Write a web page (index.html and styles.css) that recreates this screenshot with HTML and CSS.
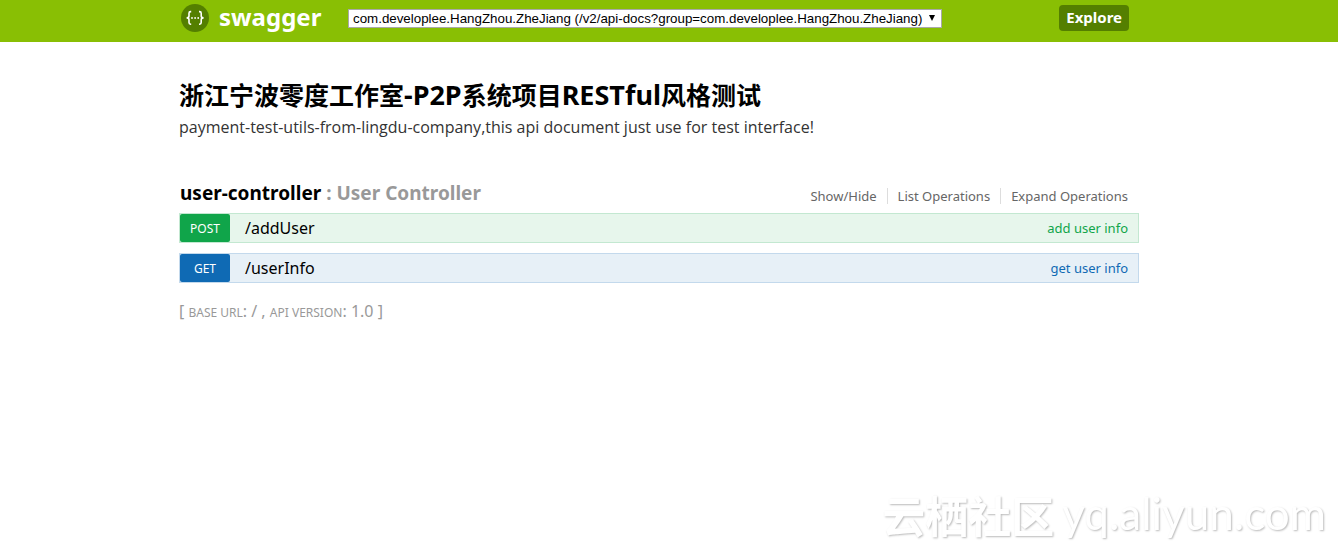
FILE: index.html
```html
<!DOCTYPE html>
<html lang="zh-CN">
<head>
  <meta charset="UTF-8">
  <meta name="viewport" content="width=device-width, initial-scale=1">
  <title>Swagger UI</title>
  <link rel="stylesheet" href="styles.css">
</head>
<body>
  <!-- Header -->
  <header class="header">
    <div class="wrap header-inner">
      <a class="logo" href="#">
        <svg class="logo-icon" viewBox="0 0 28 28" aria-hidden="true">
          <circle cx="14" cy="14" r="14" fill="#547f00"/>
          <g fill="none" stroke="#fff" stroke-width="1.6">
            <path d="M10.2 7.6H9.6Q8 7.6 8 9.2V12Q8 13.9 5.6 13.9Q8 13.9 8 15.8V18.6Q8 20.2 9.6 20.2H10.2"/>
            <path d="M18 7.6H18.6Q20.2 7.6 20.2 9.2V12Q20.2 13.9 22.6 13.9Q20.2 13.9 20.2 15.8V18.6Q20.2 20.2 18.6 20.2H18"/>
          </g>
          <g fill="#fff">
            <circle cx="11" cy="14" r=".9"/>
            <circle cx="14.1" cy="14" r=".9"/>
            <circle cx="17.2" cy="14" r=".9"/>
          </g>
        </svg>
        <span class="logo-title">swagger</span>
      </a>
      <form class="api-selector">
        <div class="select-box">
          <select class="select" aria-label="API group">
            <option>com.developlee.HangZhou.ZheJiang (/v2/api-docs?group=com.developlee.HangZhou.ZheJiang)</option>
          </select>
          <svg class="select-arrow" viewBox="0 0 6 6" aria-hidden="true"><path d="M0 0H6L3 6Z"/></svg>
        </div>
        <button class="explore" type="button">Explore</button>
      </form>
    </div>
  </header>

  <!-- API docs -->
  <main class="wrap content">
    <h1 class="info-title">浙江宁波零度工作室<span class="latin">-P2P</span>系统项目<span class="latin">RESTful</span>风格测试</h1>
    <p class="info-description">payment-test-utils-from-lingdu-company,this api document just use for test interface!</p>

    <section class="resource">
      <div class="heading">
        <h2><a href="#">user-controller</a> : User Controller</h2>
        <ul class="options">
          <li><a href="#">Show/Hide</a></li>
          <li><a href="#">List Operations</a></li>
          <li><a href="#">Expand Operations</a></li>
        </ul>
      </div>
      <ul class="operations">
        <li class="operation post">
          <a class="method" href="#">POST</a>
          <a class="path" href="#">/addUser</a>
          <a class="summary" href="#">add user info</a>
        </li>
        <li class="operation get">
          <a class="method" href="#">GET</a>
          <a class="path" href="#">/userInfo</a>
          <a class="summary" href="#">get user info</a>
        </li>
      </ul>
    </section>

    <p class="footer">[ <span>base url</span>: / , <span>api version</span>: 1.0 ]</p>
  </main>

  <div class="watermark"><span class="watermark-cn">云栖社区</span><span class="watermark-url">yq.aliyun.com</span></div>
</body>
</html>
```
FILE: styles.css
```css
* {
  margin: 0;
  padding: 0;
  box-sizing: border-box;
}
body {
  min-height: 100vh;
  background: #fff;
  font-family: "Noto Sans", "Noto Sans CJK SC", sans-serif;
  color: #000;
}
a {
  color: inherit;
  text-decoration: none;
}
ul {
  list-style: none;
}
.wrap {
  max-width: 960px;
  margin: 0 auto;
}

/* Header */
.header {
  height: 42px;
  padding-right: 20px;
  background: #89bf04;
}
.header-inner {
  display: flex;
  align-items: flex-start;
  padding: 4px 10px 0 2px;
}
.logo {
  display: flex;
  align-items: center;
  gap: 10px;
  width: 167px;
  height: 28px;
  color: #fff;
}
.logo-icon {
  width: 28px;
  height: 28px;
}
.logo-title {
  font-size: 24px;
  line-height: 26px;
  font-weight: 700;
  padding-bottom: 2px;
}
.api-selector {
  flex: 1;
  display: flex;
  align-items: center;
  justify-content: space-between;
  height: 28px;
}
.select-box {
  position: relative;
  width: 594px;
}
.select {
  display: block;
  width: 100%;
  height: 19px;
  padding: 0 16px 0 4px;
  appearance: none;
  border: 1px solid #a9a9a9;
  border-radius: 0;
  background: #fff;
  color: #000;
  font-family: "Liberation Sans", Arial, sans-serif;
}
.select-arrow {
  position: absolute;
  top: 6px;
  right: 7px;
  width: 6px;
  height: 6px;
}
.explore {
  height: 26px;
  padding: 0 7px 2px;
  border: 0;
  border-radius: 4px;
  background: #547f00;
  color: #fff;
  font-family: inherit;
  font-size: 15px;
  font-weight: 700;
}

/* Info */
.content {
  padding: 35px 20px 0 0;
  max-width: 980px;
}
.info-title {
  font-size: 25px;
  line-height: 36px;
}
.info-title .latin {
  font-size: 27px;
  line-height: 1;
}
.info-description {
  color: #333;
  font-family: "Open Sans", sans-serif;
  font-size: 16px;
  line-height: 28px;
}

/* Resource */
.resource {
  margin-top: 36px;
}
.heading {
  display: flex;
  justify-content: space-between;
  align-items: center;
  height: 36px;
  padding-bottom: 5px;
}
.heading h2 {
  padding-left: 1px;
  color: #999;
  font-size: 19px;
  line-height: 30px;
}
.heading h2 a {
  color: #000;
}
.options {
  display: flex;
  padding: 6px 11px 0 0;
}
.options li {
  padding: 0 10px;
  border-right: 1px solid #ddd;
  color: #666;
  font-size: 13px;
  line-height: 16px;
}
.options li:last-child {
  padding-right: 0;
  border-right: 0;
}
.operation {
  display: flex;
  align-items: center;
  height: 30px;
  margin-bottom: 10px;
  padding-right: 10px;
  border: 1px solid;
}
.method {
  width: 50px;
  height: 28px;
  border-radius: 2px;
  color: #fff;
  font-size: 12px;
  line-height: 30px;
  text-align: center;
}
.path {
  flex: 1;
  padding-left: 15px;
  font-size: 16px;
}
.summary {
  font-size: 13px;
}
.post {
  border-color: #c3e8d1;
  background: #e7f6ec;
}
.post .method {
  background: #10a54a;
}
.post .summary {
  color: #10a54a;
}
.get {
  border-color: #c3d9ec;
  background: #e7f0f7;
}
.get .method {
  background: #0f6ab4;
}
.get .summary {
  color: #0f6ab4;
}
.footer {
  margin-top: 16px;
  color: #999;
  font-size: 16px;
  line-height: 24px;
}
.footer span {
  font-size: 12px;
  text-transform: uppercase;
}

/* Watermark */
.watermark {
  position: fixed;
  right: 12px;
  bottom: 4px;
  display: flex;
  align-items: center;
  gap: 8px;
  color: #fff;
  font-family: Lato, "Noto Sans CJK SC", sans-serif;
  font-size: 43px;
  line-height: 48px;
  text-shadow: 1px 1px 2px #bbb;
}
.watermark-cn {
  font-weight: 700;
}
.watermark-url {
  padding-bottom: 8px;
  font-size: 44px;
}
```
